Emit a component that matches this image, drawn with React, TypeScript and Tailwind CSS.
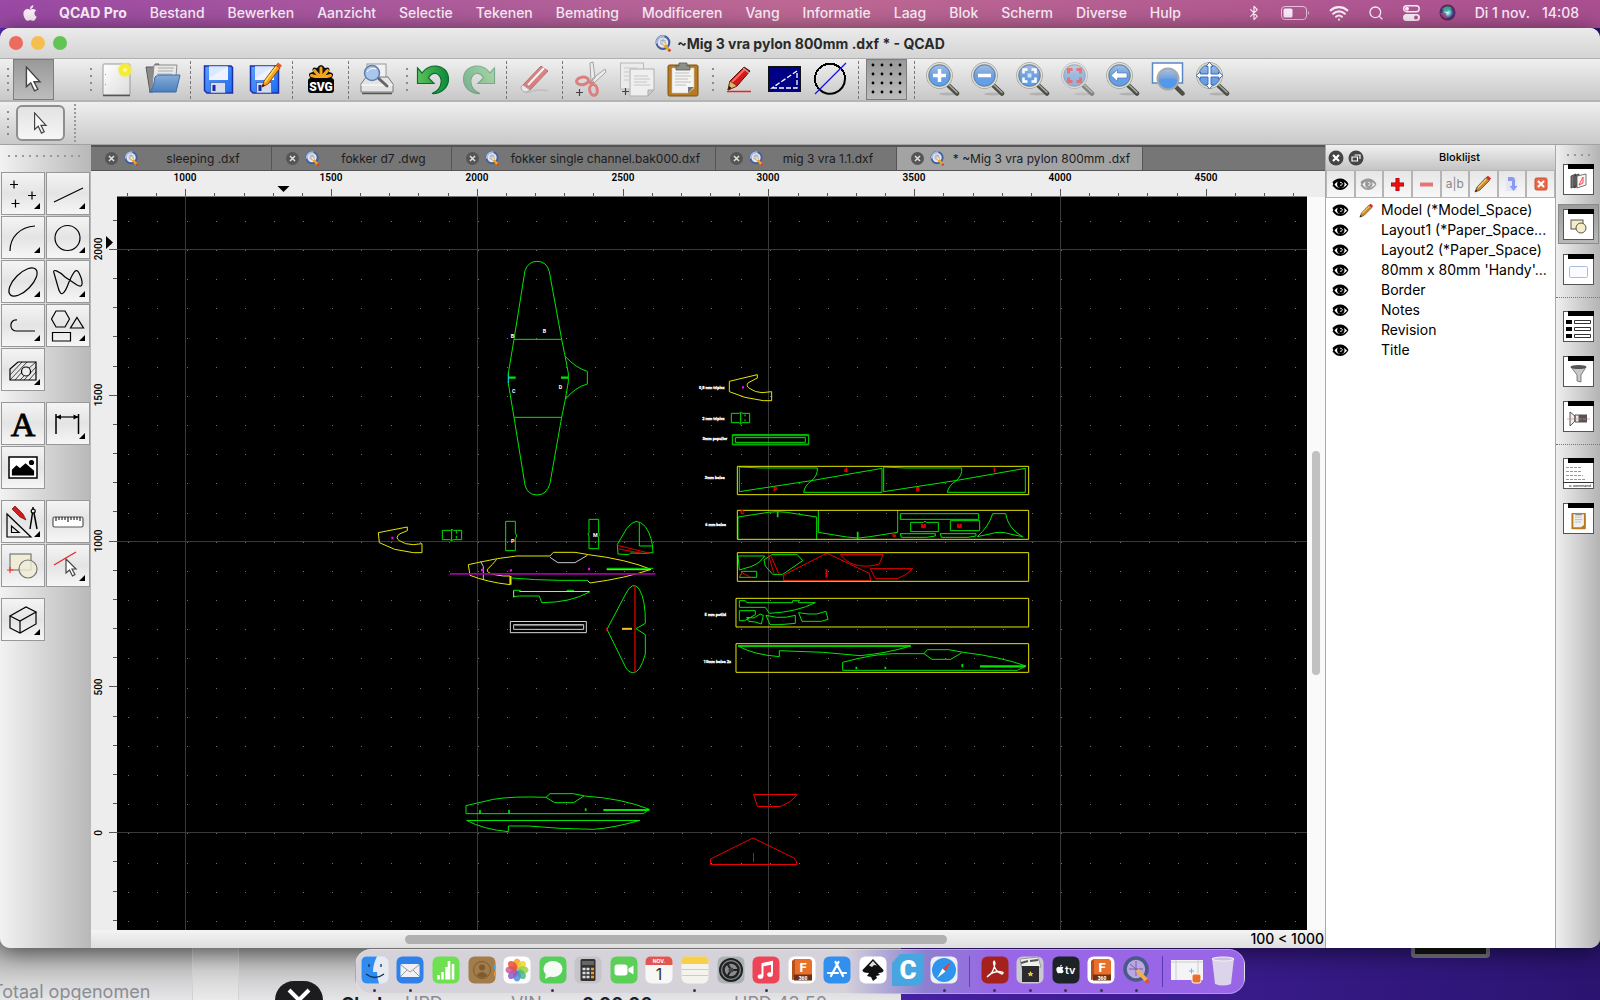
import React from "react";
import { FaApple } from "react-icons/fa";
import { Bluetooth, Wifi, Search } from "lucide-react";

const MENUS = [
  "Bestand", "Bewerken", "Aanzicht", "Selectie", "Tekenen", "Bemating", "Modificeren",
  "Vang", "Informatie", "Laag", "Blok", "Scherm", "Diverse", "Hulp",
];

const TABS = [
  { name: "sleeping .dxf", width: "w-[181px]" },
  { name: "fokker d7 .dwg", width: "w-[180px]" },
  { name: "fokker single channel.bak000.dxf", width: "w-[264px]" },
  { name: "mig 3 vra 1.1.dxf", width: "w-[181px]" },
  { name: "* ~Mig 3 vra pylon 800mm .dxf", width: "w-[246px]", active: true },
];

const BLOCKS = [
  "Model (*Model_Space)", "Layout1 (*Paper_Space...", "Layout2 (*Paper_Space)",
  "80mm x 80mm 'Handy'...", "Border", "Notes", "Revision", "Title",
];

const G = "#00e600";
const Y = "#e6e600";
const R = "#e60000";

/* ── Shared icons ── */

function Defs() {
  return (
    <svg width="0" height="0" className="absolute" aria-hidden="true">
      <defs>
        <linearGradient id="lens" x1="0" y1="0" x2="0" y2="1">
          <stop offset="0" stopColor="#a9c3e8" />
          <stop offset="0.5" stopColor="#6f9fdc" />
          <stop offset="1" stopColor="#5b9ff0" />
        </linearGradient>
        <linearGradient id="paper" x1="0" y1="0" x2="1" y2="1">
          <stop offset="0" stopColor="#ffffff" />
          <stop offset="1" stopColor="#dcdcdc" />
        </linearGradient>
        <linearGradient id="folder" x1="0" y1="0" x2="0" y2="1">
          <stop offset="0" stopColor="#86aedb" />
          <stop offset="1" stopColor="#4a7fbd" />
        </linearGradient>
        <linearGradient id="floppy" x1="0" y1="0" x2="1" y2="1">
          <stop offset="0" stopColor="#5aa0ff" />
          <stop offset="1" stopColor="#1d6cf0" />
        </linearGradient>
        <linearGradient id="green" x1="0" y1="0" x2="1" y2="0">
          <stop offset="0" stopColor="#5cc25a" />
          <stop offset="1" stopColor="#0d8a3c" />
        </linearGradient>
        <radialGradient id="glow">
          <stop offset="0" stopColor="#ffffff" />
          <stop offset="0.35" stopColor="#f6ef20" />
          <stop offset="0.7" stopColor="#f2e94a" />
          <stop offset="1" stopColor="#f5ee60" stopOpacity="0" />
        </radialGradient>
        <radialGradient id="siri">
          <stop offset="0" stopColor="#ffffff" />
          <stop offset="0.35" stopColor="#5fc8d8" />
          <stop offset="0.7" stopColor="#4a3a8a" />
          <stop offset="1" stopColor="#5a1f4a" />
        </radialGradient>
      </defs>
    </svg>
  );
}

function Magnifier({ children, faded }: { children?: React.ReactNode; faded?: boolean }) {
  return (
    <svg width="34" height="34" viewBox="0 0 34 34" opacity={faded ? 0.6 : 1}>
      <ellipse cx="22" cy="32" rx="9" ry="1.500" fill="#00000022" />
      <path d="M22 23 L31 31.500" stroke="#4c4f48" strokeWidth="4.500" strokeLinecap="round" />
      <path d="M22.500 22.500 L31 30.500" stroke="#a7aa9f" strokeWidth="1.500" strokeLinecap="round" />
      <circle cx="13.500" cy="13.500" r="12" fill="url(#lens)" stroke="#8d9087" strokeWidth="2.500" />
      <circle cx="13.500" cy="13.500" r="12" fill="none" stroke="#deded6" strokeWidth="1.500" />
      <circle cx="13.500" cy="13.500" r="10.500" fill="none" stroke="#5580b8" strokeWidth="0.800" />
      {children}
    </svg>
  );
}

function Pointer({ size = 22, light }: { size?: number; light?: boolean }) {
  return (
    <svg width={size} height={size} viewBox="0 0 22 24">
      <path d="M4 1 V19 L8 15.500 L11.500 23 L14.500 21.500 L11 14.500 H16.500 Z" fill={light ? "#f8f8f8" : "#fff"} stroke="#444" strokeWidth="1.300" />
    </svg>
  );
}

function QcadLogo({ size }: { size: number }) {
  return (
    <svg width={size} height={size} viewBox="0 0 16 16" className="shrink-0">
      <circle cx="7.500" cy="7" r="6" fill="#e3e6ee" stroke="#3f5f9e" strokeWidth="2" />
      <path d="M2 8 A5.800 5.800 0 0 1 9 1.500" fill="none" stroke="#a9bce0" strokeWidth="2" />
      <path d="M5.500 5 h4 v3.500 h-4 z M7.500 3.500 v6" fill="none" stroke="#9a9fb5" strokeWidth="0.800" />
      <path d="M8 8 L13.500 14.500" stroke="#f0a020" strokeWidth="2.600" />
      <path d="M7.500 7.200 L9.500 9.500" stroke="#fff1b0" strokeWidth="1.500" />
      <path d="M13 13.800 L14.300 15.300" stroke="#d0402a" strokeWidth="2.600" />
    </svg>
  );
}

function RedPencil({ size = 18 }: { size?: number }) {
  return (
    <svg width={size} height={size} viewBox="0 0 18 18">
      <path d="M1 17 L3 12 L12 2.500 L15.500 5.500 L6 15 Z" fill="#c98a2c" stroke="#6b4a18" strokeWidth="0.800" />
      <path d="M4 12.500 L12.500 4" stroke="#f0c878" strokeWidth="1.300" />
      <path d="M12 2.500 L14 0.800 L17 3.500 L15.500 5.500 Z" fill="#e0202a" />
      <path d="M1 17 L2 14.500 L3.500 16 Z" fill="#222" />
    </svg>
  );
}

function Eye({ faded, size = 17 }: { faded?: boolean; size?: number }) {
  return (
    <svg width={size} height={size} viewBox="0 0 17 17" opacity={faded ? 0.35 : 1}>
      <path d="M0.500 6 Q4 2 9 2.500 Q14 3 16.500 8 Q14 13.500 8.500 14 Q4 14 1.500 10.500 L0.500 10 Q2 8 0.500 6 Z" fill="#000" />
      <path d="M2.500 8.500 Q5 5 9 5.200 Q13 5.500 15 8.500 Q12 12 8.500 12 Q5 12 2.500 8.500 Z" fill="#fff" />
      <circle cx="8.800" cy="8.200" r="3.700" fill="#000" />
      <path d="M8 6.500 a1.500 1.500 0 1 1 0 2.600" fill="none" stroke="#fff" strokeWidth="1" />
    </svg>
  );
}

function Clipboard({ size = 36 }: { size?: number }) {
  return (
    <svg width={size} height={size} viewBox="0 0 36 36">
      <rect x="3" y="4" width="30" height="31" rx="1.500" fill="#b9791f" stroke="#7d5212" />
      <path d="M7 7 H29 V27 L23 32 H7 Z" fill="#f4f4f2" stroke="#c9c9c4" strokeWidth="0.600" />
      <path d="M29 26 L23 26 V32 Z" fill="#777" />
      <path d="M10 12 h14 M10 15 h16 M10 18 h13 M10 21 h16 M10 24 h11" stroke="#bdbdbd" strokeWidth="1.200" />
      <path d="M11 9 V5 H14 V2 H22 V5 H25 V9 Z" fill="#8c8f88" stroke="#5a5c57" strokeWidth="0.800" />
    </svg>
  );
}

function Floppy({ pencil }: { pencil?: boolean }) {
  return (
    <svg width="34" height="34" viewBox="0 0 34 34">
      <path d="M3 4 h26 l1.500 1.500 V31 H5 L2.500 28.500 V4 Z" fill="url(#floppy)" stroke="#1a2fa8" strokeWidth="1.500" />
      <path d="M7 4.500 H26 V18 H7 Z" fill="#eef3ff" />
      <path d="M7 4.500 H26 L7 16 Z" fill="#dce8ff" />
      <rect x="8.500" y="20.500" width="15" height="10.500" fill="#d7dbea" stroke="#3c58b8" strokeWidth="0.700" />
      <rect x="10.500" y="23" width="3" height="6" fill="#1030a0" />
      {pencil && (
        <g>
          <path d="M14 25 L16 19 L28 3 L32 6 L20 22 Z" fill="#f6a21c" stroke="#8a3a10" strokeWidth="0.900" />
          <path d="M17 20 L28 5" stroke="#ffe14a" strokeWidth="1.400" />
          <path d="M28 3 L30 0.500 L34 3.500 L32 6 Z" fill="#e05a30" />
          <path d="M14 25 L15 22 L17 23.500 Z" fill="#111" />
        </g>
      )}
    </svg>
  );
}

function Undo({ redo }: { redo?: boolean }) {
  return (
    <svg width="34" height="34" viewBox="0 0 34 34" opacity={redo ? 0.45 : 1}>
      <path
        transform={redo ? "translate(34 0) scale(-1 1)" : undefined}
        d="M1.500 6 L6 11 C12 1 31 1 32.500 16 C33 26 24 32 16 31.500 C28 27 27 13 20 11.500 C16.500 11 14 13 12.500 16 L18 21.500 H1.500 Z"
        fill="url(#green)"
        stroke="#0b6e2e"
        strokeWidth="1.200"
      />
    </svg>
  );
}

/* ── Menu bar ── */

function MenuBar() {
  return (
    <header className="flex h-7 shrink-0 items-center bg-linear-to-r from-[#9a49a4] via-[#bd6893] to-[#a94f90] pb-[3px] pl-[22px] pr-[21px] text-[14px] leading-6 font-medium text-[#fbeef8]">
      <FaApple size={18} className="mr-[21px] w-4" />
      <nav className="flex items-center gap-[23px]">
        <button type="button" className="font-bold">QCAD Pro</button>
        {MENUS.map(m => (
          <button key={m} type="button">{m}</button>
        ))}
      </nav>
      <div className="ml-auto flex items-center gap-[19px]">
        <Bluetooth size={16} strokeWidth={1.8} />
        <svg width="29" height="14" viewBox="0 0 29 14">
          <rect x="0.500" y="0.500" width="25" height="13" rx="3.500" fill="none" stroke="#e8c0dc" />
          <rect x="2.500" y="2.500" width="9" height="9" rx="1.500" fill="#fbeef8" />
          <path d="M27 5 q2 2 0 4" fill="#e8c0dc" />
        </svg>
        <Wifi size={20} strokeWidth={2.6} />
        <Search size={16} strokeWidth={2} />
        <svg width="17" height="16" viewBox="0 0 17 16">
          <rect x="0.700" y="0.700" width="15.500" height="6" rx="3" fill="none" stroke="#fbeef8" strokeWidth="1.400" />
          <circle cx="4" cy="3.700" r="2" fill="#fbeef8" />
          <rect x="0" y="9" width="17" height="7" rx="3.500" fill="#fbeef8" />
          <circle cx="13" cy="12.500" r="2" fill="#b05a92" />
        </svg>
        <svg width="17" height="17" viewBox="0 0 17 17">
          <circle cx="8.500" cy="8.500" r="8" fill="url(#siri)" />
          <path d="M3 5 Q8 0 13 4 L8 8 Z" fill="#3fae7a" opacity="0.800" />
          <path d="M1 9 Q3 14 8 15 L7 9 Z" fill="#d23a5a" opacity="0.700" />
        </svg>
        <p className="flex gap-3">
          <span>Di 1 nov.</span>
          <span>14:08</span>
        </p>
      </div>
    </header>
  );
}

/* ── Toolbars ── */

function Handle({ className = "" }: { className?: string }) {
  return (
    <div className={`flex h-6 w-[3px] flex-col justify-between ${className}`}>
      <i className="size-[2px] bg-[#8c8c8c]" />
      <i className="size-[2px] bg-[#8c8c8c]" />
      <i className="size-[2px] bg-[#8c8c8c]" />
      <i className="size-[2px] bg-[#8c8c8c]" />
    </div>
  );
}

function Sep() {
  return <div className="mx-[2px] h-[38px] w-px border-l border-dashed border-[#777]" />;
}

function Tool({ label, on, children }: { label: string; on?: boolean; children: React.ReactNode }) {
  return (
    <button
      type="button"
      aria-label={label}
      className={`flex h-[41px] w-[41px] shrink-0 items-center justify-center pb-0.5 ${on ? "border border-[#7d7d7d] bg-linear-to-b from-[#999] to-[#bdbdbd]" : ""}`}
    >
      {children}
    </button>
  );
}

function MainToolbar() {
  return (
    <div className="flex h-[43px] shrink-0 items-center gap-[5px] border-b-2 border-[#b4b4b4] bg-linear-to-b from-[#f0f0f0] to-[#c8c8c8] pl-[7px]">
      <Handle className="-mr-0.5" />
      <Tool label="Selecteren" on><Pointer size={26} /></Tool>
      <div className="w-[22px]" />
      <Handle className="ml-1 -mr-0.5" />
      <Tool label="Nieuw">
        <svg width="34" height="36" viewBox="0 0 34 36">
          <rect x="3" y="3" width="27" height="31" rx="1" fill="url(#paper)" stroke="#9a9a9a" />
          <path d="M3 34.500 h27" stroke="#555" strokeWidth="1.500" />
          <path d="M5.500 13 v1 M5.500 23 v1" stroke="#999" />
          <circle cx="25" cy="9" r="8" fill="url(#glow)" />
        </svg>
      </Tool>
      <Tool label="Openen">
        <svg width="36" height="34" viewBox="0 0 36 34">
          <path d="M1 5 H10 V2 H14 L8 30 H5 Z" fill="#8b8b8b" stroke="#5b5b5b" />
          <path d="M9 3 H32 L30 26 H7 Z" fill="#e9e9e9" stroke="#8a8a8a" />
          <path d="M13 6 h16 M13 9 h15 M12 12 h15" stroke="#aaa" />
          <path d="M10 15 Q12 12.500 16 13 H35 L31 30 H4 Q8 29 10 15 Z" fill="url(#folder)" stroke="#3b6ba5" />
        </svg>
      </Tool>
      <Sep />
      <Tool label="Opslaan"><Floppy /></Tool>
      <Tool label="Opslaan als"><Floppy pencil /></Tool>
      <Sep />
      <Tool label="SVG exporteren">
        <svg width="28" height="30" viewBox="0 0 28 30">
          <path d="M4 15 Q-1 9 6 8 Q4 2 10 4 Q14 -2 18 4 Q24 2 22 8 Q29 9 24 15 Z" fill="#111" />
          <g stroke="#f7a41d" strokeWidth="3" strokeLinecap="round">
            <path d="M14 13 V4 M13 13 L7.500 6.500 M15 13 L20.500 6.500 M12 13.500 L4.500 11.500 M16 13.500 L23.500 11.500" />
          </g>
          <rect x="1" y="14" width="26" height="15" rx="3" fill="#050505" />
          <text x="14" y="26.500" textAnchor="middle" fontFamily="Roboto" fontWeight="900" fontSize="12" fill="#fff">SVG</text>
        </svg>
      </Tool>
      <Sep />
      <Tool label="Afdrukvoorbeeld">
        <svg width="34" height="34" viewBox="0 0 34 34">
          <rect x="7" y="2" width="19" height="18" fill="#f1f1f1" stroke="#999" />
          <path d="M6 15 H28 L33 22 V30 H1 V22 Z" fill="#e4e4e4" stroke="#777" />
          <path d="M1 23 H33" stroke="#fff" />
          <path d="M2 31.500 h30" stroke="#555" strokeWidth="1.500" />
          <path d="M17 15 L27 24" stroke="#666" strokeWidth="3" strokeLinecap="round" />
          <circle cx="12" cy="11" r="7.500" fill="#a9c6ec" stroke="#5f7fae" strokeWidth="1.500" />
          <path d="M7 10 Q10 5 16 7" fill="none" stroke="#fff" />
        </svg>
      </Tool>
      <Handle className="ml-1 -mr-0.5" />
      <Tool label="Ongedaan maken"><Undo /></Tool>
      <Tool label="Opnieuw"><Undo redo /></Tool>
      <Sep />
      <Tool label="Wissen">
        <svg width="34" height="34" viewBox="0 0 34 34" opacity="0.700">
          <path d="M8 31 Q20 26 30 29" fill="none" stroke="#bbb" strokeWidth="1.500" />
          <path d="M5 23 L23 4 L30 9 L12 28 Z" fill="#d95a5a" stroke="#a34444" />
          <path d="M10 23 L26 6" stroke="#fff" strokeWidth="2.200" />
          <path d="M5 23 L12 28 L9 30 Q3 30 3 25 Z" fill="#f7f0f0" stroke="#999" />
        </svg>
      </Tool>
      <Sep />
      <Tool label="Knippen">
        <svg width="34" height="36" viewBox="0 0 34 36">
          <path d="M17 20 L16 2 L19 1 L21 17 Z M18 18 L31 8 L32 11 L20 22 Z" fill="#ececec" stroke="#9a9a9a" strokeWidth="0.900" />
          <ellipse cx="8.500" cy="20" rx="6" ry="3.800" fill="none" stroke="#dc7f7f" strokeWidth="3" transform="rotate(-8 8 20)" />
          <ellipse cx="19.500" cy="29" rx="3.800" ry="5.500" fill="none" stroke="#dc7f7f" strokeWidth="3" transform="rotate(-10 19 29)" />
          <path d="M13 20 L20 23" stroke="#dc7f7f" strokeWidth="3" />
          <path d="M5.500 28 v7 M2 31.500 h7" stroke="#444" strokeWidth="1.200" />
        </svg>
      </Tool>
      <Tool label="Kopiëren">
        <svg width="36" height="36" viewBox="0 0 36 36">
          <rect x="1.500" y="2" width="23" height="26" fill="#ebebeb" stroke="#b9b9b9" />
          <path d="M5 7 h13 M5 11 h13 M5 15 h5 M5 19 h5" stroke="#c9c9c9" />
          <path d="M11 8 H35 V29 L29 35 H11 Z" fill="#efefef" stroke="#b0b0b0" />
          <path d="M15 15 h14 M15 18 h16 M15 21 h13 M15 24 h16" stroke="#c6c6c6" />
          <path d="M35 29 H29 V35 Z" fill="#ccc" stroke="#aaa" />
          <path d="M6.500 27 v7 M3 30.500 h7" stroke="#444" strokeWidth="1.200" />
        </svg>
      </Tool>
      <Tool label="Plakken"><Clipboard /></Tool>
      <Handle className="ml-1 -mr-0.5" />
      <Tool label="Pen">
        <svg width="26" height="28" viewBox="0 0 26 28">
          <path d="M2 25 L4 16 L18 2 L24 6 L11 21 Z" fill="#d21c1c" stroke="#5a0c0c" />
          <path d="M6 17 L19 4" stroke="#ff6a5a" strokeWidth="2" />
          <path d="M2 25 L4 16 L11 21 Z" fill="#e6b36a" stroke="#5a3a0c" strokeWidth="0.700" />
          <path d="M2 25 L3 21 L5.500 23 Z" fill="#111" />
          <path d="M17 3 L23 8" stroke="#a9a0a0" strokeWidth="1.500" />
          <path d="M1 26.500 H25" stroke="#f02020" strokeWidth="1.500" />
        </svg>
      </Tool>
      <Tool label="Conceptmodus">
        <svg width="33" height="26" viewBox="0 0 33 26">
          <rect x="0.500" y="0.500" width="32" height="25" fill="#000084" stroke="#111" />
          <path d="M4 22 H29 V5 Z" fill="none" stroke="#fff" strokeWidth="1.300" strokeDasharray="5 2" />
        </svg>
      </Tool>
      <Tool label="Antialiasing">
        <svg width="33" height="34" viewBox="0 0 33 34">
          <path d="M31 17 A15 15 0 0 1 5 27" fill="none" stroke="#000" strokeWidth="2" />
          <path d="M5 27 A15 15 0 1 1 31 17" fill="none" stroke="#000" strokeWidth="2" shapeRendering="crispEdges" />
          <path d="M1 32 L32 1" stroke="#1515e8" strokeWidth="1.300" />
        </svg>
      </Tool>
      <Sep />
      <Tool label="Raster" on>
        <svg width="32" height="32" viewBox="0 0 32 32">
          {[2, 11, 20, 29].map(y => [2, 11, 20, 29].map(x => <circle key={`${x}-${y}`} cx={x} cy={y} r="1.400" />))}
        </svg>
      </Tool>
      <Sep />
      <div className="flex gap-1">
        <Tool label="Inzoomen">
          <Magnifier><path d="M13.500 7 v13 M7 13.500 h13" stroke="#fff" strokeWidth="3.500" /></Magnifier>
        </Tool>
        <Tool label="Uitzoomen">
          <Magnifier><path d="M7 13.500 h13" stroke="#fff" strokeWidth="3.500" /></Magnifier>
        </Tool>
        <Tool label="Auto zoom">
          <Magnifier>
            <path d="M7.500 11.500 v-4 h4 M15.500 7.500 h4 v4 M19.500 15.500 v4 h-4 M11.500 19.500 h-4 v-4" fill="none" stroke="#fff" strokeWidth="2.500" />
            <rect x="11.500" y="11.500" width="4" height="4" fill="#cfe2fa" />
          </Magnifier>
        </Tool>
        <Tool label="Zoom naar selectie">
          <Magnifier faded>
            <path d="M7.500 11.500 v-4 h4 M15.500 7.500 h4 v4 M19.500 15.500 v4 h-4 M11.500 19.500 h-4 v-4" fill="none" stroke="#f02a2a" strokeWidth="3" />
          </Magnifier>
        </Tool>
        <Tool label="Vorige weergave">
          <Magnifier><path d="M5 13.500 L11.500 7.500 V11 H21 V16 H11.500 V19.500 Z" fill="#fff" stroke="#4a78b8" strokeWidth="0.700" /></Magnifier>
        </Tool>
        <Tool label="Venster zoom">
          <svg width="34" height="34" viewBox="0 0 34 34">
            <rect x="1.500" y="1" width="30" height="20" fill="#fff" stroke="#5a87c2" strokeWidth="1.500" />
            <path d="M25 25 L31.500 31.500" stroke="#4c4f48" strokeWidth="4.500" strokeLinecap="round" />
            <circle cx="17" cy="17" r="10.500" fill="url(#lens)" stroke="#a9aba3" strokeWidth="2" />
            <path d="M7.500 18 Q17 15 26.500 18 Q25 26 17 26.500 Q9 26 7.500 18 Z" fill="#4b96f0" opacity="0.700" />
          </svg>
        </Tool>
        <Tool label="Pannen">
          <Magnifier>
            <path d="M13.500 0 L17 4.500 H15 V12 H22.500 V10 L27 13.500 L22.500 17 V15 H15 V22.500 H17 L13.500 27 L10 22.500 H12 V15 H4.500 V17 L0 13.500 L4.500 10 V12 H12 V4.500 H10 Z" fill="#fff" stroke="#3a6fc0" strokeWidth="1" />
          </Magnifier>
        </Tool>
      </div>
    </div>
  );
}

/* ── Left tool matrix ── */

function DrawTool({ label, more = true, children }: { label: string; more?: boolean; children: React.ReactNode }) {
  return (
    <button type="button" aria-label={label} className="h-[43px] w-11 border border-[#989898] bg-linear-to-b from-[#f4f4f4] via-[#e4e4e4] to-[#f6f6f6]">
      <svg width="42" height="41" viewBox="0 0 42 41" fill="none" stroke="#000" strokeWidth="1.200">
        {children}
        {more && <path d="M38 30 V36 H32 Z" fill="#000" stroke="none" />}
      </svg>
    </button>
  );
}

function LeftDock() {
  return (
    <aside className="flex w-[91px] shrink-0 flex-col gap-[11px] bg-linear-to-r from-[#f2f2f2] to-[#b8b8b8] pl-px">
      <div className="-mb-[11px] flex h-[27px] items-start gap-[5px] px-[7px] pt-[10px]">
        {Array.from({ length: 11 }, (_, i) => <i key={i} className="size-[2px] bg-[#999]" />)}
      </div>
      <div className="flex flex-wrap gap-px">
        <DrawTool label="Punt"><path d="M12 7.500 v8 M8 11.500 h8 M30 18.500 v8 M26 22.500 h8 M13.500 26.500 v8 M9.500 30.500 h8" /></DrawTool>
        <DrawTool label="Lijn"><path d="M7 29 L36 15" /></DrawTool>
        <DrawTool label="Boog"><path d="M8 34 C8 20 18 10 33 9" /></DrawTool>
        <DrawTool label="Cirkel"><circle cx="20.500" cy="21" r="12.500" /></DrawTool>
        <DrawTool label="Ellips"><ellipse cx="21" cy="21" rx="18" ry="8.500" transform="rotate(-45 21 21)" /></DrawTool>
        <DrawTool label="Spline"><path d="M7 12 C5 7 12 10 18 16 L30 24 C37 28 36 20 32 12 C29 6 26 12 22 21 C18 32 14 38 11 26 Z" /></DrawTool>
        <DrawTool label="Polylijn"><path d="M15 15 C7 14 7 26 14 26 H33" /></DrawTool>
        <DrawTool label="Vormen">
          <path d="M9 6 H18 L22.500 14 L18 22 H9 L4.500 14 Z M30 12.500 L36.500 23 H23.500 Z M5.500 27.500 H23.500 V36 H5.500 Z" />
        </DrawTool>
        <DrawTool label="Arcering">
          <path d="M8 31 V20 L16 13 H34 V31 Z" />
          <path d="M8 26 L20 13 M8 31 L25 13 M13 31 L20 23 M18 31 L22 27 M26 20 L34 13 M22 31 L34 18 M27 31 L34 23" strokeWidth="0.700" />
          <circle cx="24" cy="22.500" r="4.500" fill="#eee" />
        </DrawTool>
      </div>
      <div className="flex flex-wrap gap-px">
        <DrawTool label="Tekst" more={false}>
          <text x="21" y="33" textAnchor="middle" fontFamily="Liberation Serif" fontSize="34" fill="#000" strokeWidth="0.900">A</text>
        </DrawTool>
        <DrawTool label="Bemating">
          <path d="M9 11 V31 M31.500 11 V31" strokeWidth="1.500" />
          <path d="M9 14 H31" />
          <path d="M9 14 L14 11.500 V16.500 Z M31.500 14 L26.500 11.500 V16.500 Z" fill="#000" stroke="none" />
        </DrawTool>
        <DrawTool label="Afbeelding" more={false}>
          <rect x="7" y="10" width="28" height="21" fill="#fff" strokeWidth="1.500" />
          <path d="M10.500 28 V23 L14.500 19 L18 22 L23.500 17 L31.500 24 V28 Z" fill="#000" />
          <circle cx="29.500" cy="15.500" r="2" fill="#000" />
        </DrawTool>
      </div>
      <div className="flex flex-wrap gap-px">
        <DrawTool label="Gereedschap">
          <path d="M5 13 V36 H29 Z M9.500 25 V31.500 H17 Z" />
          <path d="M10 8 L13 5 L21 13 L24 19 L18 16 Z" fill="#d01c1c" stroke="#601010" strokeWidth="0.700" />
          <path d="M31 6 v3 M30.500 12 L28 28 M32 12 L35 28" strokeWidth="1.500" />
          <circle cx="31.200" cy="10" r="2" />
        </DrawTool>
        <DrawTool label="Meten" more={false}>
          <rect x="6" y="16" width="30" height="10" rx="1.500" stroke="#555" fill="#fff" />
          <path d="M9 16 v4 M12 16 v3 M15 16 v3 M18 16 v3 M21 16 v5 M24 16 v3 M27 16 v3 M30 16 v3 M33 16 v4" strokeWidth="1" />
        </DrawTool>
        <DrawTool label="Blok" more={false}>
          <rect x="8" y="9" width="21" height="16" fill="#f1ecd6" stroke="#777" />
          <circle cx="26" cy="24" r="9" fill="#f1ecd6" fillOpacity="0.800" stroke="#777" />
          <path d="M8 22 v6 M5 25 h6" stroke="#f33" />
        </DrawTool>
        <DrawTool label="Selectie">
          <path d="M7 20 L29 7" stroke="#f02020" />
          <path d="M19 14 V28 L22.500 25 L25.500 31 L28 29.500 L25 24 H29 Z" fill="#fff" stroke="#444" />
        </DrawTool>
      </div>
      <div className="flex">
        <DrawTool label="Projectie"><path d="M8 17 L18 22 L34 13 L24 8 Z M8 17 V29 L18 34 L34 25 V13 M18 22 V34" /></DrawTool>
      </div>
    </aside>
  );
}

/* ── Rulers and drawing ── */

const STEP = 29.16;

function TopRuler() {
  return (
    <svg className="h-[26px] w-full shrink-0 bg-[#ededed]" viewBox="91 171 1234 26" preserveAspectRatio="xMinYMin slice">
      <path d="M117 196.500 H1307" stroke="#777" />
      {Array.from({ length: 41 }, (_, i) => {
        const x = Math.round(185.2 + (i - 2) * STEP) + 0.5;
        return <path key={i} d={`M${x} 196 V${(i - 2) % 5 ? 193 : 189}`} stroke="#555" />;
      })}
      {[1000, 1500, 2000, 2500, 3000, 3500, 4000, 4500].map(n => (
        <text key={n} x={Math.round(185.2 + ((n - 1000) / 100) * STEP)} y="181" textAnchor="middle" fontSize="10" fontWeight="600" fontFamily="Roboto, sans-serif">{n}</text>
      ))}
      <path d="M277.500 186 H289.500 L283.500 192 Z" />
    </svg>
  );
}

function SideRuler() {
  return (
    <svg className="h-full w-[26px] shrink-0 bg-[#ededed]" viewBox="91 197 26 733" preserveAspectRatio="xMinYMin slice">
      {Array.from({ length: 25 }, (_, i) => {
        const y = Math.round(249 + (i - 1) * STEP) + 0.5;
        return <path key={i} d={`M117 ${y} H${(i - 1) % 5 ? 113 : 109}`} stroke="#555" />;
      })}
      {[2000, 1500, 1000, 500, 0].map((n, i) => {
        const y = Math.round(249.3 + i * STEP * 5);
        return <text key={n} transform={`translate(102 ${y}) rotate(-90)`} textAnchor="middle" fontSize="10" fontWeight="500" fontFamily="Roboto, sans-serif">{n}</text>;
      })}
      <path d="M106 236 V249 L113 242.500 Z" />
    </svg>
  );
}

function Drawing() {
  return (
    <svg className="h-full min-w-0 flex-1 bg-black" viewBox="117 197 1190 733" preserveAspectRatio="xMinYMin slice" fill="none">
      <path d="M185.500 197 V930 M477.500 197 V930 M768.500 197 V930 M1060.500 197 V930 M117 249.500 H1307 M117 541.500 H1307 M117 832.500 H1307" stroke="#3a3a3a" />
      {Array.from({ length: 25 }, (_, j) => (
        <path
          key={j}
          d={Array.from({ length: 41 }, (_, i) => `M${Math.round(128.200 + i * STEP)} ${Math.round(221 + j * STEP) + 0.5}h1`).join("")}
          stroke="#707070"
        />
      ))}

      {/* Wing */}
      <g transform="translate(450 240) scale(0.33333)" strokeWidth="3" stroke={G}>
        <path d="M225 92 Q235 64 261 64 Q290 64 298 95 L335 298 L346 352 L355 400 V425 L346 478 L335 532 L300 730 Q290 765 262 765 Q232 765 225 735 L192 532 L175 430 V400 L192 298 Z" />
        <path d="M192 298 H335 M192 532 H335 M346 350 Q380 385 412 394 V432 Q375 442 346 478" />
        <path d="M175 413 H197 M333 413 H355" strokeWidth="7" />
        <path d="M175 400 V430" stroke="#00d0e0" />
        <g fill="#fff" stroke="none" fontSize="16" fontWeight="700" fontFamily="Roboto">
          <text x="182" y="293">B</text>
          <text x="278" y="279">B</text>
          <text x="186" y="459">C</text>
          <text x="326" y="447">D</text>
        </g>
      </g>

      {/* Fuselage, formers and tail */}
      <g transform="translate(360 500) scale(0.33333)" strokeWidth="3" stroke={G}>
        <path d="M55 98 L142 81 V92 L118 102 Q105 114 118 122 Q135 134 160 134 L186 131 V158 H160 L104 148 L58 128 Z" stroke={Y} />
        <path d="M247 91 H272 L276 88 L280 91 H305 V119 H280 L275 122 L270 119 H247 Z M275 88 V122 M289 93 v8 M289 108 v8" />
        <path d="M437 64 H466 V98 L470 108 L466 116 V152 H437 Z M687 58 H716 V98 L718 104 L716 110 V146 H687 V108 L684 102 L687 98 Z" />
        <path d="M772 133 L800 86 Q828 46 856 80 Q878 110 879 158 L850 160 L812 159 L806 164 L774 162 Z M838 68 V138 H878" />
        <path d="M772 136 L870 160 M772 146 L845 160" stroke={R} />
        <path d="M325 194 L362 186 L412 176 L470 168 H570 L580 157 H645 L686 164 Q800 178 873 208 Q800 234 690 249 L682 241" stroke={Y} />
        <path d="M325 194 L330 226 Q380 246 450 254 V228 H430 Q375 222 382 208 Q398 194 410 178" stroke={Y} />
        <path d="M452 228 V254" stroke={Y} strokeWidth="5" />
        <path d="M456 234 Q520 240 598 241 H682 M740 205 H880" />
        <path d="M740 209 H873" stroke={Y} />
        <path d="M362 184 L370 200 V240 M570 172 L594 188 H645 L682 166" stroke="#c8c8c8" />
        <path d="M270 221.500 H886" stroke="#a000a0" strokeWidth="5" />
        <path d="M94 114 h6 M363 210 h8 M450 211 h6 M684 207 h6" stroke="#ff00ff" strokeWidth="7" />
        <path d="M461 271 H482 M620 271 H642 M461 290 L478 288 H538 L545 308 Q630 308 689 276" />
        <path d="M461 271 V292 M478 274.500 H689" stroke="#d0d0d0" />
        <path d="M451 364.500 H679 V398 H451 Z M461 374 H671 V388 H461 Z" stroke="#d8d8d8" />
        <path d="M464 377 H668" stroke="#888" />
        <path d="M741 388 L798 280 Q818 240 838 268 Q857 300 856 370 L828 386 L856 404 V462 Q840 520 818 518 Q803 516 796 500 Z" />
        <path d="M825 258 V517" stroke="#b00000" strokeWidth="5" />
        <path d="M740 384 V392" stroke={R} />
        <path d="M786 386.500 H816" stroke="#f0c020" strokeWidth="6" />
        <path d="M318 917 L400 898 Q460 888 558 892 L570 881 H640 L674 888 Q790 896 868 928 L850 941 H318 Z" />
        <path d="M558 892 L584 908 H641 L672 888" />
        <path d="M360 930 V941 M447 930 V941 M677 925 V933" strokeWidth="5" />
        <path d="M730 930 H868" strokeWidth="6" />
        <path d="M840 961.500 H320 Q370 988 445 995 V978 H505 L600 985 L700 988 Q760 984 840 961" />
        <g fill="#fff" stroke="none" fontSize="16" fontWeight="700" fontFamily="Roboto">
          <text x="453" y="130">P</text>
          <text x="699" y="112">M</text>
        </g>
      </g>

      {/* Cut sheets */}
      <g transform="translate(680 360) scale(0.33333)" strokeWidth="3" stroke={G}>
        <path d="M148 64 L232 44 V54 L205 68 Q196 78 210 86 Q225 97 246 98 L275 95 V122 H250 L195 112 L148 95 Z" stroke={Y} />
        <path d="M154 160 H178 L182 156 L186 160 H209 V188 H186 L182 193 L178 188 H154 Z M182 158 v32 M195 163 v6 M195 178 v6" />
        <path d="M157 224 H386 V254 H157 Z M166 233 H376 V247 H166 Z" />
        <path d="M157 226 H386 M157 253 H386" stroke="#00b000" strokeWidth="5" />

        <path d="M178 321 V395 L400 361 L606 325 V397 H371 Q374 376 394 363 Q414 346 412 324 H246 Z" />
        <path d="M611 321 V395 L832 361 L1036 325 V397 H802 Q806 376 828 363 Q848 346 845 324 H676 Z" />
        <path d="M174 538 V471 L265 457 Q292 453 320 457 L410 471 V538 M415 451 V517 L500 531 Q533 538 570 530 L653 517 V451" />
        <path d="M293 456 V472 M533 515 V536" strokeWidth="5" />
        <path d="M661 461 H896 V478 H661 Z M692 487 H731 L735 484 L739 487 H775 V515 H692 Z M811 482 H899 V512 H811 Z M661 521 H766 V528 L740 532 H664 Z M781 521 H888 V528 L864 532 H784 Z" />
        <path d="M938 461 H977 Q984 506 1028 530 L990 522 Q960 512 930 522 L892 530 Q926 500 938 461 Z" />

        <path d="M174 588 H254 Q240 610 212 620 L178 630 Z M252 600 L275 584 H352 L368 602 L308 643 H278 L256 618 Z M188 634 H230 V652 H178 Z" />
        <path d="M266 588 L282 640 M272 586 L296 640 M178 652 L186 638 L212 652" stroke={R} />
        <path d="M311 661 V645 L436 582 H446 L568 640 L572 662 H311 Z M481 584 H609 L598 612 Q560 624 524 614 Q498 606 481 584 Z M571 626 H698 Q680 646 652 656 H586 Z" stroke={R} />
        <path d="M439.500 628 V653" stroke={R} strokeWidth="6" />

        <path d="M178 722 H196 L200 728 H338 V722 H356 V728 H406 Q350 756 268 760 L256 742 H178 Z" />
        <path d="M178 752 H226 V764 L194 782 H178 Z M200 772 L222 774 L240 762 L250 766 L244 792 L226 786 L206 784 Z M258 766 L290 772 Q320 774 346 766 V790 L300 794 H270 Z M356 758 L384 762 Q410 766 438 754 L444 778 L424 784 H366 Z" />

        <path d="M692 858 H174 Q220 884 298 890 V872 L430 877 L540 887 Q620 880 692 858" />
        <path d="M174 858 H692" strokeWidth="4" />
        <path d="M488 931 V907 Q580 882 640 881 H732 L742 869 H806 L850 877 Q960 890 1038 918 L1012 931 Z M732 881 L756 898 H812 L846 878" />
        <path d="M900 919 H1036" strokeWidth="7" />
        <path d="M529 920 v7 M616 920 v7 M847 912 v10" strokeWidth="5" />

        <path d="M172 319 H1046 V404 H172 Z M172 451 H1046 V538 H172 Z M172 578 H1046 V664 H172 Z M168 715 H1046 V801 H168 Z M168 851 H1046 V937 H168 Z" stroke={Y} />

        <g fill="#f00000" stroke="#f00000" strokeWidth="1" fontSize="16" fontWeight="700" fontFamily="Roboto">
          <text x="280" y="392">P</text>
          <text x="492" y="335">d</text>
          <text x="707" y="393">B</text>
          <text x="940" y="335">I</text>
          <text x="181" y="462">C</text>
          <text x="636" y="532">G</text>
          <text x="722" y="505">M</text>
          <text x="830" y="505">M</text>
        </g>
        <path d="M186 82 h6" stroke="#ff00ff" strokeWidth="7" />
        <g fill="#fff" stroke="#fff" strokeWidth="0.800" fontSize="12" fontWeight="700" fontFamily="Roboto" textAnchor="end">
          <text x="134" y="87">0,8 mm triplex</text>
          <text x="134" y="181">2 mm triplex</text>
          <text x="142" y="239">3mm populier</text>
          <text x="134" y="356">3mm balsa</text>
          <text x="138" y="499">6 mm balsa</text>
          <text x="138" y="767">5 mm potlid</text>
          <text x="153" y="910">10mm balsa 2x</text>
        </g>
      </g>

      {/* Canopy and stabiliser templates */}
      <path d="M753.500 794.500 H797 Q792 802 780 806.500 H757.500 Z" stroke={R} />
      <path d="M710.500 864.500 V859 L753 838 L794 858 Q797 861 797 864.500 Z M753.500 853 V862" stroke={R} />
    </svg>
  );
}

/* ── Block list ── */

function BlockList() {
  const buttons: [string, React.ReactNode][] = [
    ["Alles tonen", <Eye key="i" />],
    ["Alles verbergen", <Eye key="i" faded />],
    ["Toevoegen", <svg key="i" width="15" height="15"><path d="M7.500 1 V14 M1 7.500 H14" stroke="#900" strokeWidth="4" /><path d="M7.500 1.500 V13.500 M1.500 7.500 H13.500" stroke="#f01010" strokeWidth="2.500" /></svg>],
    ["Verwijderen", <svg key="i" width="15" height="15"><path d="M1 7.500 H14" stroke="#d98080" strokeWidth="4" /><path d="M1.500 7.500 H13.500" stroke="#f07070" strokeWidth="2" /></svg>],
    ["Hernoemen", <span key="i" className="text-[12px] text-[#888]">a|b</span>],
    ["Bewerken", <RedPencil key="i" />],
    ["Invoegen", <svg key="i" width="16" height="18"><rect x="2" y="2" width="11" height="14" fill="#e6e6f2" /><path d="M4 2 H8 Q11 2 11 6 V11 H13.500 L9.500 16 L5.500 11 H8 V6 H4 Z" fill="#8a9af0" /></svg>],
    ["Sluiten", <svg key="i" width="14" height="14"><rect x="1" y="1" width="12" height="12" rx="1.500" fill="#e8694a" stroke="#c85030" /><path d="M4 4 L10 10 M10 4 L4 10" stroke="#fff" strokeWidth="2" /></svg>],
  ];
  return (
    <section className="flex w-[231px] shrink-0 flex-col border-x border-[#a8a8a8] bg-white">
      <div className="flex h-[25px] shrink-0 items-center gap-1 bg-linear-to-b from-[#f0f0f0] to-[#c4c4c4] pl-[2px]">
        <button type="button" aria-label="Sluiten">
          <svg width="16" height="16"><circle cx="8" cy="8" r="7.500" fill="#444" /><path d="M5 5 L11 11 M11 5 L5 11" stroke="#fff" strokeWidth="2.200" /></svg>
        </button>
        <button type="button" aria-label="Losmaken">
          <svg width="16" height="16"><circle cx="8" cy="8" r="7.500" fill="#444" /><path d="M6.500 5 H12 V9 M4 7 H9.500 V11 H4 Z" fill="none" stroke="#fff" strokeWidth="1.200" /></svg>
        </button>
        <h2 className="flex-1 pl-[18px] text-center text-[11px] font-medium">Bloklijst</h2>
        <span className="w-[18px]" />
      </div>
      <div className="flex h-7 shrink-0">
        {buttons.map(([label, icon]) => (
          <button key={label} type="button" aria-label={label} className="flex flex-1 items-center justify-center border border-[#b5b5b5] bg-linear-to-b from-[#e6e6e6] to-[#f8f8f8]">
            {icon}
          </button>
        ))}
      </div>
      <ul className="pt-[2px] text-[14px] leading-5">
        {BLOCKS.map((b, i) => (
          <li key={b} className="flex h-5 items-center pl-[6px]">
            <Eye />
            <span className="flex w-8 justify-center pl-0.5">{i === 0 && <RedPencil size={15} />}</span>
            <span className="whitespace-nowrap">{b}</span>
          </li>
        ))}
      </ul>
    </section>
  );
}

/* ── Right widget dock ── */

function DockTool({ label, on, children }: { label: string; on?: boolean; children: React.ReactNode }) {
  return (
    <button type="button" aria-label={label} className={`flex h-10 w-[41px] shrink-0 items-center justify-center ${on ? "border border-[#8a8a8a] bg-linear-to-b from-[#9c9c9c] to-[#b8b8b8]" : ""}`}>
      <svg width="31" height="31" viewBox="0 0 31 31" fill="none">
        <rect x="0.500" y="0.500" width="30" height="30" fill="#fff" stroke="#555" />
        <rect x="5" y="0" width="26" height="5" fill="#000" />
        {children}
      </svg>
    </button>
  );
}

function DottedLine() {
  return <div className="my-[3px] w-full border-t border-dotted border-[#777]" />;
}

function RightDock() {
  return (
    <aside className="flex w-11 shrink-0 flex-col items-center gap-[5px] bg-linear-to-r from-[#efefef] to-[#b4b4b4] pt-[9px]">
      <div className="flex h-0 gap-[5px]">
        <i className="size-[2px] bg-[#999]" /><i className="size-[2px] bg-[#999]" /><i className="size-[2px] bg-[#999]" /><i className="size-[2px] bg-[#999]" />
      </div>
      <DockTool label="Laaglijst">
        <path d="M8 12 L13 10 V22 L8 24 Z M11 12 L16 10 V22 L11 24 Z" fill="#777" stroke="#333" strokeWidth="0.800" />
        <path d="M14 12 L23 10 V21 L14 24 Z" fill="#f6f6f6" stroke="#555" strokeWidth="0.800" />
        <path d="M16 21 L20 13 V19 Z" stroke="#f33" strokeWidth="0.900" />
      </DockTool>
      <DockTool label="Bloklijst" on>
        <rect x="8" y="11" width="12" height="9" fill="#f7ecc8" stroke="#555" />
        <circle cx="18" cy="19" r="5" fill="#f7ecc8" stroke="#555" />
      </DockTool>
      <DockTool label="Weergaven"><rect x="6.500" y="12.500" width="18" height="11" rx="1" fill="#fbfcff" stroke="#a9bcdc" /></DockTool>
      <DottedLine />
      <DockTool label="Eigenschappen">
        <path d="M3 9 h6 v4 h-6 z M3 16 h6 v4 h-6 z M3 23 h6 v4 h-6 z" fill="#000" />
        <path d="M11.500 9.500 h16 v3 h-16 z M11.500 16.500 h16 v3 h-16 z M11.500 23.500 h16 v3 h-16 z" stroke="#333" />
      </DockTool>
      <DockTool label="Filter">
        <path d="M8 11 L14 19 V25 L18 26 V19 L23 11 Z" fill="#c8c8c8" stroke="#555" strokeWidth="0.700" />
        <ellipse cx="15.500" cy="11" rx="8" ry="2" fill="#555" />
      </DockTool>
      <DockTool label="Bibliotheek">
        <path d="M7 11 L12 15 V20 L7 25 Z M12 14 H16 V21 H12 Z" fill="#eee" stroke="#444" strokeWidth="0.900" />
        <rect x="16" y="13.500" width="8" height="8" fill="#555" />
        <path d="M4 18 H27" stroke="#f77" strokeWidth="0.700" strokeDasharray="3 1" />
      </DockTool>
      <DottedLine />
      <DockTool label="Opdrachtregel">
        <path d="M3 9.500 h16 M3 13.500 h15 M3 17.500 h17 M3 21.500 h19" stroke="#999" strokeDasharray="3 1" />
        <path d="M0 24.500 h31" stroke="#333" />
        <text x="28" y="29" textAnchor="end" fontSize="4" fontFamily="Roboto" fill="#000">c: command</text>
      </DockTool>
      <DockTool label="Klembord">
        <g transform="translate(7 8) scale(0.480)">
          <rect x="3" y="4" width="30" height="34" rx="1.500" fill="#b9791f" />
          <path d="M7 7 H29 V29 L23 34 H7 Z" fill="#f0f0ee" />
          <path d="M10 13 h14 M10 18 h16 M10 23 h13" stroke="#aaa" strokeWidth="1.500" />
          <path d="M11 9 V4 H25 V9 Z" fill="#8c8f88" />
        </g>
      </DockTool>
    </aside>
  );
}

/* ── macOS dock ── */

function Tile({ bg, children }: { bg: string; children?: React.ReactNode }) {
  return (
    <svg width="28" height="28" viewBox="0 0 28 28" fill="none">
      <rect x="0.500" y="0.500" width="27" height="27" rx="6" fill={bg} />
      {children}
    </svg>
  );
}

function Fusion() {
  return (
    <Tile bg="#fff">
      <path d="M4 5 L7 3 H22 L24 5 V24 H4 Z" fill="#e8702a" />
      <path d="M4 5 L7 3 V21 L4 24 Z" fill="#b8501a" />
      <rect x="6" y="18.500" width="18" height="6" fill="#6e3114" />
      <text x="15" y="16" textAnchor="middle" fontSize="13" fontWeight="800" fontFamily="Roboto" fill="#fff">F</text>
      <text x="15" y="23.500" textAnchor="middle" fontSize="5" fontWeight="800" fontFamily="Roboto" fill="#fff">360</text>
    </Tile>
  );
}

function Slot({ label, open, children }: { label: string; open?: boolean; children: React.ReactNode }) {
  return (
    <button type="button" aria-label={label} className="flex h-full flex-1 flex-col items-center pt-[6px]">
      {children}
      {open && <i className="mt-[5px] size-[3px] rounded-full bg-[#3a3350]" />}
    </button>
  );
}

function MacDock() {
  const petals = ["#f5a623", "#f0d32a", "#9bcf4a", "#4fb87a", "#4a90d9", "#8a5ac8", "#c85a9a", "#e8503a"];
  return (
    <div className="absolute bottom-[6px] left-1/2 flex h-[45px] w-[890px] -translate-x-1/2 rounded-2xl border border-white/30 bg-linear-to-r from-[#d6d2da] from-55% via-[#8e80cf] via-64% to-[#9866e6] to-72% pr-[3px] pl-px">
      <Slot label="Finder" open>
        <Tile bg="#e6eaf2">
          <path d="M6 0.500 H16 Q12 8 12 16 H16 Q16 22 18 27.500 H6 Q0.500 27.500 0.500 21 V6 Q0.500 0.500 6 0.500 Z" fill="#2f8cf0" />
          <path d="M8 8 V11 M20 8 V11 M5 18 Q14 25 23 18" stroke="#15304f" strokeWidth="1.300" />
        </Tile>
      </Slot>
      <Slot label="Mail" open>
        <Tile bg="#2f80ea"><rect x="4.500" y="8" width="19" height="13" rx="1.500" fill="#f1f1f3" /><path d="M5 9 L14 16 L23 9 M5 20 L11 14 M23 20 L17 14" stroke="#999" /></Tile>
      </Slot>
      <Slot label="Numbers">
        <Tile bg="#6fe052"><path d="M6.500 23.500 V19 M10.500 23.500 V16 M14.500 23.500 V11 M17 23.500 V5 M21 23.500 V8" stroke="#fff" strokeWidth="2.600" /></Tile>
      </Slot>
      <Slot label="Contacten">
        <Tile bg="#a27c4b"><circle cx="14" cy="14" r="8.500" stroke="#7d5a30" /><circle cx="14" cy="11.500" r="3" fill="#7d5a30" /><path d="M8.500 19 Q14 13 19.500 19 Q14 25 8.500 19" fill="#7d5a30" /><path d="M27 9 v4" stroke="#4ab0e0" strokeWidth="2" /><path d="M27 16 v4" stroke="#e8903a" strokeWidth="2" /></Tile>
      </Slot>
      <Slot label="Foto's">
        <Tile bg="#fff">
          {petals.map((c, i) => <ellipse key={c} cx="14" cy="8" rx="3.800" ry="5.500" fill={c} fillOpacity="0.850" transform={`rotate(${i * 45} 14 14)`} />)}
        </Tile>
      </Slot>
      <Slot label="Berichten" open>
        <Tile bg="#55cf57"><ellipse cx="14" cy="13" rx="9.500" ry="8" fill="#f6fbf6" /><path d="M7 17 L6 23 L12 20 Z" fill="#f6fbf6" /></Tile>
      </Slot>
      <Slot label="Rekenmachine">
        <Tile bg="#c6c4c8">
          <rect x="6.500" y="3" width="15" height="22" rx="1.500" fill="#333" /><rect x="8" y="5" width="12" height="4" fill="#666" />
          <path d="M8.500 13 h7 M8.500 17 h7 M8.500 21 h7" stroke="#ddd" strokeWidth="2.500" strokeDasharray="3 1" /><path d="M17 13 h3 M17 17 h3 M17 21 h3" stroke="#f39a2a" strokeWidth="2.500" />
        </Tile>
      </Slot>
      <Slot label="FaceTime">
        <Tile bg="#5ccf58"><rect x="4.500" y="8.500" width="13" height="11" rx="3" fill="#fff" /><path d="M18.500 12.500 L23.500 9.500 V18.500 L18.500 15.500 Z" fill="#fff" /></Tile>
      </Slot>
      <Slot label="Agenda">
        <Tile bg="#f7f7f5">
          <path d="M6 0.500 H22 Q27.500 0.500 27.500 6 V9 H0.500 V6 Q0.500 0.500 6 0.500 Z" fill="#e25550" />
          <text x="14" y="7" textAnchor="middle" fontSize="5" fontWeight="700" fontFamily="Inter" fill="#fff">NOV.</text>
          <text x="14" y="23.500" textAnchor="middle" fontSize="16" fontFamily="Inter" fill="#333">1</text>
        </Tile>
      </Slot>
      <Slot label="Notities" open>
        <Tile bg="#f4f3ee"><path d="M6 0.500 H22 Q27.500 0.500 27.500 6 V8 H0.500 V6 Q0.500 0.500 6 0.500 Z" fill="#f8cf45" /><path d="M1 13.500 H27 M1 19.500 H27" stroke="#ccc" /></Tile>
      </Slot>
      <Slot label="Systeemvoorkeuren">
        <Tile bg="#a9b3b3"><circle cx="14" cy="14" r="11" fill="#8a8d8f" stroke="#222" strokeWidth="2" /><circle cx="14" cy="14" r="7.500" stroke="#222" strokeWidth="2.500" /><path d="M14 14 L22 14 M14 14 L10 7 M14 14 L10 21" stroke="#222" strokeWidth="2" /><circle cx="14" cy="14" r="2.500" fill="#444" /></Tile>
      </Slot>
      <Slot label="Muziek" open>
        <Tile bg="#ee4458"><path d="M10.500 20 V8 L20 6 V18" stroke="#fff" strokeWidth="2" /><path d="M10.500 9 L20 7" stroke="#fff" strokeWidth="3" /><ellipse cx="8.500" cy="20.500" rx="2.800" ry="2.300" fill="#fff" /><ellipse cx="18" cy="18.500" rx="2.800" ry="2.300" fill="#fff" /></Tile>
      </Slot>
      <Slot label="Fusion 360"><Fusion /></Slot>
      <Slot label="App Store">
        <Tile bg="#2f90f0"><path d="M15.500 6 L8 20 M12.500 6 L20 20 M5 17 H15 M19 17 H23" stroke="#fff" strokeWidth="2.200" strokeLinecap="round" /></Tile>
      </Slot>
      <Slot label="Inkscape">
        <Tile bg="#fff"><path d="M14 3 L24.500 14 Q25 17 19 17 L21 19 L17 20 L18 22 L14 25 L12 21 L8 20 L10 17 Q3 17 3.500 14 Z" fill="#111" /><path d="M14 5 L18 9.500 L15 9 L13 11 L10 9.500 Z" fill="#ddd" /></Tile>
      </Slot>
      <Slot label="Cura">
        <svg width="33" height="32" viewBox="0 0 33 32" className="-mt-[2px]"><path d="M8 0 H32 V25 L27 32 H0 V9 Z" fill="#47a6e0" /><text x="16" y="25" textAnchor="middle" fontSize="26" fontWeight="900" fontFamily="Roboto" fill="#fff">C</text></svg>
      </Slot>
      <Slot label="Safari" open>
        <Tile bg="#eef0f4"><circle cx="14" cy="14" r="12" fill="#2f94ee" /><path d="M21 6 L15.500 15.500 L12.500 12.500 Z" fill="#e8433a" /><path d="M7 22 L15.500 15.500 L12.500 12.500 Z" fill="#fff" /></Tile>
      </Slot>
      <div className="mx-[7px] my-[6px] w-px bg-[#5a4aa8]" />
      <Slot label="Acrobat" open>
        <Tile bg="#a5221c"><path d="M6 21 Q13 17 14 7 Q13 3 12.500 7 Q14 16 21 18 Q24 16 18 15.500 Q10 16 6 21 Z" stroke="#fff" strokeWidth="1.400" /></Tile>
      </Slot>
      <Slot label="iMovie" open>
        <Tile bg="#c9c9cf"><path d="M4 3 L22 1 L25 11 L6 13 Z" fill="#efefef" stroke="#999" /><path d="M5 7 L12 5 M14 5 L22 4" stroke="#555" strokeWidth="2" /><rect x="6" y="10" width="17" height="16" fill="#2b2b2e" /><path d="M14.500 15 l1 2 h2 l-1.500 1.500 l0.500 2 l-2 -1 l-2 1 l0.500 -2 l-1.500 -1.500 h2 z" fill="#f5c93a" /></Tile>
      </Slot>
      <Slot label="TV" open>
        <Tile bg="#1d2226"><FaApple x="3" y="8" size={10} color="#fff" /><text x="13" y="18" fontSize="11" fontWeight="600" fontFamily="Inter" fill="#fff">tv</text></Tile>
      </Slot>
      <Slot label="Fusion 360" open><Fusion /></Slot>
      <Slot label="QCAD" open>
        <svg width="28" height="28" viewBox="0 0 28 28" fill="none"><circle cx="13" cy="13" r="11" fill="#b9a8e0" stroke="#4a5a88" strokeWidth="3.500" /><path d="M6 13 H20 M13 5 V20 M7 8 L19 18" stroke="#7a5ab0" /><path d="M14 14 L24 25" stroke="#f2b04a" strokeWidth="4" /><path d="M23 24 L25.500 27" stroke="#d05a4a" strokeWidth="4" /></svg>
      </Slot>
      <div className="mx-[7px] my-[6px] w-px bg-[#5a3ab0]" />
      <Slot label="Venster">
        <svg width="33" height="28" viewBox="0 0 33 28"><rect x="0" y="4" width="32" height="20" fill="#f4f4f6" /><path d="M0 6 h32 M5 4 v20 M27 4 v20" stroke="#ccc" /><path d="M18 15 h5 M20.500 12.500 v5" stroke="#7ab0d0" /><rect x="21" y="18" width="9" height="9" rx="2" fill="#e8702a" stroke="#fff" /></svg>
      </Slot>
      <Slot label="Prullenmand">
        <svg width="26" height="30" viewBox="0 0 26 30"><path d="M2 2 L5 28 Q13 31 21 28 L24 2 Z" fill="#e2e0ea" fillOpacity="0.900" /><ellipse cx="13" cy="3" rx="11" ry="2" fill="#c9c2dc" stroke="#f3f3f7" /></svg>
      </Slot>
    </div>
  );
}

/* ── Page ── */

export default function App() {
  return (
    <div className="relative flex h-screen flex-col overflow-hidden bg-linear-to-r from-[#5a2ab8] via-[#4a22a8] to-[#2a1470] font-['Inter',sans-serif] text-black">
      <Defs />
      <MenuBar />

      <main className="z-10 mb-[52px] flex min-h-0 flex-1 flex-col overflow-hidden rounded-[10px] bg-[#dcdcdc] shadow-[0_4px_24px_rgba(0,0,0,0.6)]">
        <div className="relative flex h-[31px] shrink-0 items-center justify-center border-b border-[#b0b0b0] bg-linear-to-b from-[#ebebeb] to-[#d4d4d4]">
          <div className="absolute left-[9px] flex gap-2">
            <button type="button" aria-label="Sluit" className="size-[14px] rounded-full bg-[#ed6a5e]" />
            <button type="button" aria-label="Minimaliseer" className="size-[14px] rounded-full bg-[#f5bf4f]" />
            <button type="button" aria-label="Vergroot" className="size-[14px] rounded-full bg-[#61c554]" />
          </div>
          <QcadLogo size={17} />
          <h1 className="ml-[5px] text-[14px] font-bold text-[#2a2a2a]">~Mig 3 vra pylon 800mm .dxf * - QCAD</h1>
        </div>

        <MainToolbar />
        <div className="flex h-[43px] shrink-0 items-center border-b border-[#a2a2a2] bg-linear-to-b from-[#efefef] to-[#c9c9c9] pl-[7px]">
          <Handle />
          <button type="button" aria-label="Reset" className="ml-[6px] flex h-9 w-[49px] items-center justify-center rounded-md border-2 border-[#8e8e8e] bg-linear-to-b from-[#e2e2e2] to-[#f6f6f6]">
            <Pointer size={22} light />
          </button>
          <div className="ml-[9px] h-[38px] border-l-2 border-dotted border-[#999]" />
        </div>

        <div className="flex min-h-0 flex-1">
          <LeftDock />

          <div className="flex min-w-0 flex-1 flex-col">
            <div className="flex h-[26px] shrink-0 border-t-2 border-b border-[#555] bg-[#767676] text-[12px] text-[#1c1c1c]">
              {TABS.map(t => (
                <div key={t.name} className={`flex items-center border-r border-[#555] pr-1 pl-[14px] ${t.width} ${t.active ? "bg-[#a3a3a3]" : "bg-[#767676]"}`}>
                  <button type="button" aria-label="Tabblad sluiten" className="mr-[6px] shrink-0">
                    <svg width="13" height="13"><circle cx="6.500" cy="6.500" r="6.500" fill="#555" /><path d="M4 4 L9 9 M9 4 L4 9" stroke="#e0e0e0" strokeWidth="1.500" /></svg>
                  </button>
                  <QcadLogo size={15} />
                  <button type="button" className="flex-1 text-center whitespace-nowrap">{t.name}</button>
                </div>
              ))}
            </div>
            <TopRuler />
            <div className="flex min-h-0 flex-1">
              <SideRuler />
              <Drawing />
              <div className="w-[18px] shrink-0 bg-[#fafafa] px-[5px] pt-[254px]">
                <div className="h-[224px] rounded-full bg-[#c1c1c1]" />
              </div>
            </div>
            <div className="flex h-[18px] shrink-0 items-center bg-linear-to-b from-[#f4f4f4] to-[#dedede]">
              <div className="ml-[314px] h-[9px] w-[542px] rounded-full bg-[#b0b0b0]" />
              <span className="ml-auto pr-px text-[14px] leading-[18px] font-medium whitespace-nowrap">100 &lt; 1000</span>
            </div>
          </div>

          <BlockList />
          <RightDock />
        </div>
      </main>

      {/* Browser window showing below the CAD window */}
      <div className="absolute bottom-0 left-0 flex h-[60px] w-[901px] items-end overflow-hidden bg-linear-to-b from-[#a8a8a8] to-[#e6e6e8] text-[18px] leading-4 whitespace-nowrap text-[#8a8d92]">
        <p className="-ml-2 w-[200px] shrink-0">Totaal opgenomen</p>
        <div className="h-full w-[47px] shrink-0 border-x border-[#d2d2d2] bg-white/20" />
        <div className="ml-9 flex h-[19px] w-12 shrink-0 justify-center overflow-hidden rounded-t-full bg-[#1c1c1e]">
          <svg width="30" height="19" viewBox="0 0 30 19" fill="none" stroke="#fff" strokeWidth="4"><path d="M5 9 L15 19 L25 9" /></svg>
        </div>
        <div className="-mb-3 ml-[18px] flex">
          <span className="w-16 font-bold text-[#1c1c1e]">Clark</span>
          <span className="w-[106px]">HPD</span>
          <span className="w-[71px]">VIN</span>
          <span className="w-[152px] font-bold text-[#1c2433]">0.00.00</span>
          <span>HPD 43 50</span>
        </div>
      </div>
      <div className="absolute right-[110px] bottom-[42px] h-[16px] w-[79px] rounded-sm border-4 border-[#77757f] bg-[#151515]" />

      <div className="absolute inset-x-0 bottom-0 z-20">
        <MacDock />
      </div>
    </div>
  );
}
